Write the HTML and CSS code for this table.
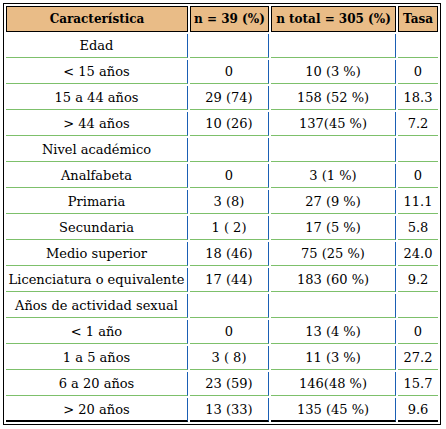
FILE: index.html
```html
<!DOCTYPE html>
<html lang="es">
<head>
<meta charset="utf-8">
<title>Tabla</title>
<link rel="stylesheet" href="styles.css">
</head>
<body>
<table class="data">
  <thead>
    <tr>
      <th class="c1">Característica</th>
      <th class="c2">n = 39 (%)</th>
      <th class="c3">n total = 305 (%)</th>
      <th class="c4">Tasa</th>
    </tr>
  </thead>
  <tbody>
    <tr><td>Edad</td><td></td><td></td><td></td></tr>
    <tr><td>&lt; 15 años</td><td>0</td><td>10 (3 %)</td><td>0</td></tr>
    <tr><td>15 a 44 años</td><td>29 (74)</td><td>158 (52 %)</td><td>18.3</td></tr>
    <tr><td>&gt; 44 años</td><td>10 (26)</td><td>137(45 %)</td><td>7.2</td></tr>
    <tr><td>Nivel académico</td><td></td><td></td><td></td></tr>
    <tr><td>Analfabeta</td><td>0</td><td>3 (1 %)</td><td>0</td></tr>
    <tr><td>Primaria</td><td>3 (8)</td><td>27 (9 %)</td><td>11.1</td></tr>
    <tr><td>Secundaria</td><td>1 ( 2)</td><td>17 (5 %)</td><td>5.8</td></tr>
    <tr><td>Medio superior</td><td>18 (46)</td><td>75 (25 %)</td><td>24.0</td></tr>
    <tr><td>Licenciatura o equivalente</td><td>17 (44)</td><td>183 (60 %)</td><td>9.2</td></tr>
    <tr><td>Años de actividad sexual</td><td></td><td></td><td></td></tr>
    <tr><td>&lt; 1 año</td><td>0</td><td>13 (4 %)</td><td>0</td></tr>
    <tr><td>1 a 5 años</td><td>3 ( 8)</td><td>11 (3 %)</td><td>27.2</td></tr>
    <tr><td>6 a 20 años</td><td>23 (59)</td><td>146(48 %)</td><td>15.7</td></tr>
    <tr class="last"><td>&gt; 20 años</td><td>13 (33)</td><td>135 (45 %)</td><td>9.6</td></tr>
  </tbody>
</table>
</body>
</html>
```

FILE: styles.css
```css
html, body {
  margin: 0;
  padding: 0;
  background: #ffffff;
}

.data {
  margin: 3px;
  width: 438px;
  border: 1px solid #000000;
  border-collapse: separate;
  border-spacing: 2px;
  table-layout: fixed;
  font-family: "DejaVu Serif", serif;
  color: #000000;
}

.data th,
.data td {
  box-sizing: border-box;
  padding: 0;
  text-align: center;
  vertical-align: middle;
  white-space: nowrap;
}

.data th {
  height: 26px;
  background: #e9bc87;
  border: 1px solid #000000;
  font-size: 12px;
  font-weight: bold;
}

.c1 { width: 182px; }
.c2 { width: 79px; }
.c3 { width: 125px; }
.c4 { width: 40px; }

.data td {
  height: 24px;
  font-size: 13px;
  border-bottom: 1px solid #7dc06b;
  border-right: 1px solid #1a5fb4;
}

.data td:last-child {
  border-right: none;
}

.data tr.last td {
  border-bottom: 2px solid #000000;
}
```
